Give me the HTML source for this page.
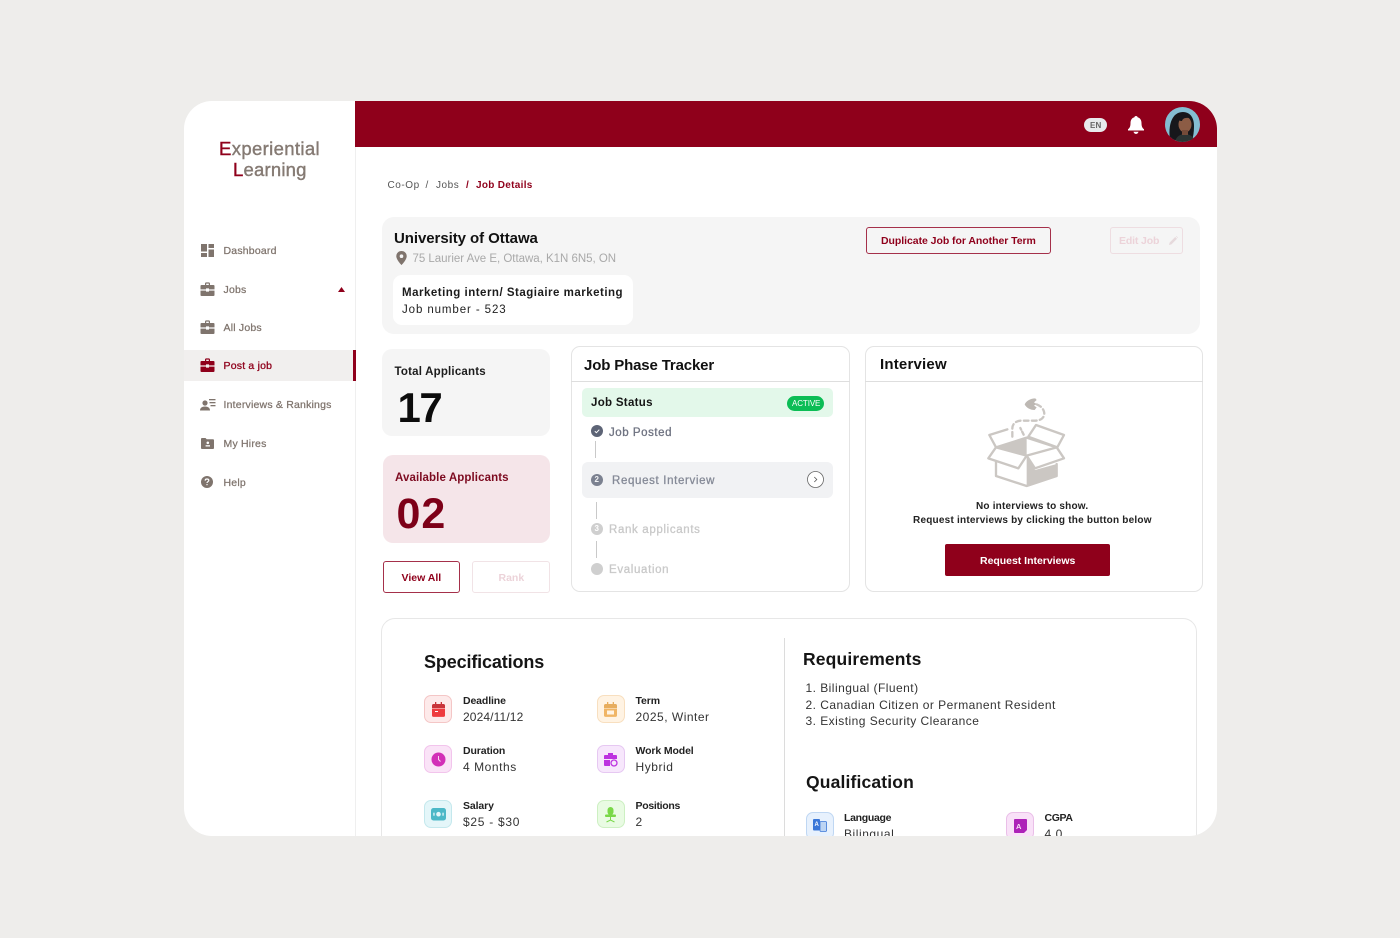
<!DOCTYPE html>
<html lang="en"><head><meta charset="utf-8"><title>Job Details</title>
<style>
html,body{margin:0;padding:0;width:1400px;height:938px;overflow:hidden;background:#eeedeb;font-family:"Liberation Sans",sans-serif;}
.a{position:absolute;}
.t{position:absolute;white-space:nowrap;line-height:1;}
#shell{position:absolute;left:184px;top:101px;width:1033px;height:735px;background:#fff;border-radius:28px;overflow:hidden;}
#stage{position:absolute;left:-184px;top:-101px;width:1400px;height:938px;}
.nav{font-size:10.5px;color:#7f746d;font-weight:400;letter-spacing:.2px;-webkit-text-stroke:.25px #7f746d;}
.k{font-size:10.5px;font-weight:700;color:#222;letter-spacing:-.12px;}
.v{font-size:12px;color:#333;letter-spacing:.55px;}
.ic{position:absolute;width:28px;height:28px;border-radius:7px;box-sizing:border-box;border:1px solid;}
.crumb{font-size:10px;color:#555;letter-spacing:.55px;}
svg{position:absolute;overflow:visible;}
</style></head><body>
<div id="shell"><div id="stage">

<div class="a" style="left:355px;top:101px;width:862px;height:46px;background:#8f001b;"></div>
<div class="a" style="left:355px;top:147px;width:1px;height:700px;background:#efefef;"></div>

<!-- logo -->
<div class="t" style="left:219px;top:139.5px;font-size:18.5px;color:#857a73;letter-spacing:.36px;-webkit-text-stroke:.4px #857a73;"><span style="color:#8f001b;-webkit-text-stroke:.4px #8f001b;">E</span>xperiential</div>
<div class="t" style="left:233px;top:160.5px;font-size:18.5px;color:#857a73;letter-spacing:.2px;-webkit-text-stroke:.4px #857a73;"><span style="color:#8f001b;-webkit-text-stroke:.4px #8f001b;">L</span>earning</div>

<!-- nav -->
<div class="a" style="left:184px;top:350px;width:171px;height:31px;background:#f1efee;"></div>
<div class="a" style="left:352.5px;top:350px;width:3px;height:31px;background:#8f001b;"></div>

<svg style="left:201px;top:244px" width="14" height="13" viewBox="0 0 14 13" fill="#7f746d"><rect x="0" y="0" width="6" height="7.5"/><rect x="7.5" y="0" width="5.5" height="4"/><rect x="0" y="9" width="6" height="4"/><rect x="7.5" y="5.5" width="5.5" height="7.5"/></svg>
<div class="t nav" style="left:223.5px;top:245.5px;">Dashboard</div>

<svg style="left:200px;top:282px" width="15" height="14" viewBox="0 0 15 14" fill="#7f746d"><path d="M5 3V1.6C5 .9 5.5.4 6.2.4h2.6c.7 0 1.2.5 1.2 1.2V3H13.5c.6 0 1 .4 1 1v3.4H9V6.4H6v1H.5V4c0-.6.4-1 1-1zM6.2 1.6V3h2.6V1.6z"/><path d="M.5 8.6H6v1h3v-1h5.5V13c0 .6-.4 1-1 1h-12c-.6 0-1-.4-1-1z"/></svg>
<div class="t nav" style="left:223.5px;top:284.5px;">Jobs</div>
<svg style="left:338px;top:287px" width="7" height="5" viewBox="0 0 7 5"><path d="M3.5 0L7 5H0z" fill="#8f001b"/></svg>

<svg style="left:200px;top:320px" width="15" height="14" viewBox="0 0 15 14" fill="#7f746d"><path d="M5 3V1.6C5 .9 5.5.4 6.2.4h2.6c.7 0 1.2.5 1.2 1.2V3H13.5c.6 0 1 .4 1 1v3.4H9V6.4H6v1H.5V4c0-.6.4-1 1-1zM6.2 1.6V3h2.6V1.6z"/><path d="M.5 8.6H6v1h3v-1h5.5V13c0 .6-.4 1-1 1h-12c-.6 0-1-.4-1-1z"/></svg>
<div class="t nav" style="left:223.5px;top:322.5px;">All Jobs</div>

<svg style="left:200px;top:358px" width="15" height="14" viewBox="0 0 15 14" fill="#8f001b"><path d="M5 3V1.6C5 .9 5.5.4 6.2.4h2.6c.7 0 1.2.5 1.2 1.2V3H13.5c.6 0 1 .4 1 1v3.4H9V6.4H6v1H.5V4c0-.6.4-1 1-1zM6.2 1.6V3h2.6V1.6z"/><path d="M.5 8.6H6v1h3v-1h5.5V13c0 .6-.4 1-1 1h-12c-.6 0-1-.4-1-1z"/></svg>
<div class="t nav" style="left:223.5px;top:360.5px;color:#8f001b;-webkit-text-stroke:.3px #8f001b;">Post a job</div>

<svg style="left:200px;top:399px" width="16" height="12" viewBox="0 0 16 12" fill="#7f746d"><circle cx="5" cy="4" r="2.6"/><path d="M0 11.5c0-2.6 2-4 5-4s5 1.4 5 4z"/><rect x="9" y="0" width="6.5" height="1.3"/><rect x="9.5" y="3" width="6" height="1.3"/><rect x="10.5" y="6" width="5" height="1.3"/></svg>
<div class="t nav" style="left:223.5px;top:399.5px;">Interviews &amp; Rankings</div>

<svg style="left:201px;top:438px" width="13" height="11" viewBox="0 0 13 11" fill="#7f746d"><path d="M0 1c0-.6.4-1 1-1h3.5l1.2 1.3H12c.6 0 1 .4 1 1V10c0 .6-.4 1-1 1H1c-.6 0-1-.4-1-1z"/><circle cx="6.8" cy="4.8" r="1.3" fill="#fff"/><rect x="4.6" y="7.2" width="4.4" height="1.3" fill="#fff"/></svg>
<div class="t nav" style="left:223.5px;top:438.5px;">My Hires</div>

<svg style="left:201px;top:476px" width="12" height="12" viewBox="0 0 12 12"><circle cx="6" cy="6" r="6" fill="#7f746d"/><path d="M4.2 4.6C4.2 3.6 5 3 6 3s1.8.6 1.8 1.5S6 5.8 6 7" fill="none" stroke="#fff" stroke-width="1.2"/><rect x="5.4" y="8" width="1.2" height="1.2" fill="#fff"/></svg>
<div class="t nav" style="left:223.5px;top:477.5px;">Help</div>

<!-- header right -->
<div class="a" style="left:1084px;top:118px;width:23px;height:14px;border-radius:7px;background:#e8eaec;"></div>
<div class="t" style="left:1090px;top:121.5px;font-size:8px;color:#666;letter-spacing:.2px;font-weight:700;">EN</div>
<svg style="left:1128px;top:116px" width="16" height="18" viewBox="0 0 16 18" fill="#fff"><path d="M8 0c.9 0 1.500.6 1.600 1.300C12.200 2 13.500 4.300 13.500 7c0 3 .5 4.700 2.500 6.300V14.500H0v-1.200C2 11.700 2.500 10 2.500 7c0-2.700 1.300-5 3.900-5.700C6.500.6 7.100 0 8 0z"/><path d="M5.500 15.800h5c-.3 1.300-1.300 2.200-2.500 2.200s-2.200-.9-2.500-2.200z"/></svg>
<svg style="left:1165px;top:107px" width="35" height="35" viewBox="0 0 35 35"><defs><clipPath id="av"><circle cx="17.500" cy="17.500" r="17.500"/></clipPath></defs><g clip-path="url(#av)"><rect width="35" height="35" fill="#84bdd2"/><path d="M5 33C3 20 6 5 18 5c8 0 11 7 11 14 0 5-.5 10-2 14z" fill="#17171b"/><ellipse cx="20" cy="17.500" rx="6.500" ry="8" fill="#8c5c45"/><path d="M12 11c3-4 10-4 14 0-3 0-8-1-9 3-2 0-4-1-5-3z" fill="#17171b"/><path d="M10 35c1-6 6-8 10-8s9 2 10 8z" fill="#2b3433"/><path d="M17 23h6v5h-6z" fill="#744b39"/></g></svg>

<!-- breadcrumb -->
<div class="t crumb" style="left:387.5px;top:180.6px;">Co-Op</div>
<div class="t crumb" style="left:425.5px;top:180.6px;">/</div>
<div class="t crumb" style="left:436px;top:180.6px;">Jobs</div>
<div class="t crumb" style="left:466px;top:180.6px;color:#8f001b;font-weight:700;">/</div>
<div class="t crumb" style="left:476px;top:180.6px;color:#8f001b;font-weight:700;letter-spacing:.3px;">Job Details</div>

<!-- university card -->
<div class="a" style="left:382px;top:217px;width:818px;height:117px;background:#f5f5f5;border-radius:12px;"></div>
<div class="t" style="left:394px;top:231px;font-size:15px;font-weight:700;color:#111;letter-spacing:-.06px;">University of Ottawa</div>
<svg style="left:396px;top:251px" width="11" height="14" viewBox="0 0 11 14"><path d="M5.500 0C2.500 0 .3 2.200.3 5.200.3 8.800 5.500 14 5.500 14s5.200-5.200 5.200-8.800C10.700 2.200 8.500 0 5.500 0z" fill="#7f746d"/><circle cx="5.500" cy="5.200" r="1.800" fill="#f5f5f5"/></svg>
<div class="t" style="left:412.5px;top:253.5px;font-size:11.5px;color:#a9a9a9;letter-spacing:-.02px;">75 Laurier Ave E, Ottawa, K1N 6N5, ON</div>
<div class="a" style="left:393px;top:275px;width:240px;height:50px;background:#fff;border-radius:9px;"></div>
<div class="t" style="left:402px;top:287.5px;font-size:11.5px;font-weight:700;color:#1c1c1c;letter-spacing:.5px;">Marketing intern/ Stagiaire marketing</div>
<div class="t" style="left:402px;top:304.5px;font-size:11.5px;color:#222;letter-spacing:.9px;">Job number - 523</div>

<div class="a" style="left:866px;top:227px;width:185px;height:27px;box-sizing:border-box;border:1px solid #a5304a;border-radius:3px;"></div>
<div class="t" style="left:881px;top:235.5px;font-size:10.5px;font-weight:700;color:#8f001b;letter-spacing:-.05px;">Duplicate Job for Another Term</div>
<div class="a" style="left:1110px;top:227px;width:73px;height:27px;box-sizing:border-box;border:1px solid #eedde1;border-radius:3px;"></div>
<div class="t" style="left:1119px;top:235.5px;font-size:10.5px;font-weight:700;color:#ecd3d9;letter-spacing:-.15px;">Edit Job</div>
<svg style="left:1169px;top:236px" width="9" height="9" viewBox="0 0 9 9"><path d="M0 9l.6-2.400L6.200 1l1.800 1.800L2.400 8.400zM6.900.3L7.400 0 9 1.600l-.4.500z" fill="#e6d9dc"/></svg>

<!-- left stats -->
<div class="a" style="left:382px;top:349px;width:168px;height:87px;background:#f5f5f5;border-radius:10px;"></div>
<div class="t" style="left:394.5px;top:366.5px;font-size:11.5px;font-weight:700;color:#1c1c1c;letter-spacing:.2px;">Total Applicants</div>
<div class="t" style="left:397.5px;top:387px;font-size:42px;font-weight:700;color:#0c0c0c;letter-spacing:-1.5px;">17</div>
<div class="a" style="left:383px;top:455px;width:167px;height:88px;background:#f5e5e9;border-radius:10px;"></div>
<div class="t" style="left:395px;top:472.5px;font-size:11.5px;font-weight:700;color:#7d0a20;letter-spacing:.1px;">Available Applicants</div>
<div class="t" style="left:396.5px;top:493px;font-size:43px;font-weight:700;color:#7d0018;letter-spacing:1px;">02</div>
<div class="a" style="left:383px;top:561px;width:77px;height:32px;box-sizing:border-box;border:1px solid #a5304a;border-radius:3px;"></div>
<div class="t" style="left:401.5px;top:572.5px;font-size:10.5px;font-weight:700;color:#8f001b;letter-spacing:0;">View All</div>
<div class="a" style="left:472px;top:561px;width:78px;height:32px;box-sizing:border-box;border:1px solid #f1e3e6;border-radius:3px;"></div>
<div class="t" style="left:498.5px;top:572.5px;font-size:10.5px;font-weight:700;color:#ecd3d9;letter-spacing:0;">Rank</div>

<!-- tracker -->
<div class="a" style="left:571px;top:346px;width:279px;height:246px;box-sizing:border-box;border:1px solid #e4e4e4;border-radius:9px;"></div>
<div class="a" style="left:571px;top:381px;width:279px;height:1px;background:#dedede;"></div>
<div class="t" style="left:584px;top:358px;font-size:15px;font-weight:700;color:#111;letter-spacing:-.15px;">Job Phase Tracker</div>
<div class="a" style="left:582px;top:388px;width:251px;height:29px;background:#e3f8ea;border-radius:5px;"></div>
<div class="t" style="left:591px;top:398px;font-size:11.5px;font-weight:700;color:#151515;letter-spacing:.3px;">Job Status</div>
<div class="a" style="left:787px;top:396px;width:37px;height:15px;background:#0bbd55;border-radius:8px;"></div>
<div class="t" style="left:792px;top:400px;font-size:8px;color:#fff;letter-spacing:-.1px;">ACTIVE</div>

<svg style="left:591px;top:425px" width="12" height="12" viewBox="0 0 12 12"><circle cx="6" cy="6" r="6" fill="#5d6476"/><path d="M3.800 6.200l1.600 1.500 2.900-3" fill="none" stroke="#fff" stroke-width="1"/></svg>
<div class="t" style="left:609px;top:427.5px;font-size:11.5px;font-weight:400;color:#6e7280;letter-spacing:.55px;-webkit-text-stroke:.3px #6e7280;">Job Posted</div>
<div class="a" style="left:595px;top:441px;width:1px;height:17px;background:#c9c9c9;"></div>

<div class="a" style="left:582px;top:462px;width:251px;height:36px;background:#f1f2f4;border-radius:6px;"></div>
<svg style="left:591px;top:474px" width="12" height="12" viewBox="0 0 12 12"><circle cx="6" cy="6" r="6" fill="#7b8190"/></svg>
<div class="t" style="left:594.5px;top:476px;font-size:8px;font-weight:700;color:#f1f2f4;">2</div>
<div class="t" style="left:612px;top:475.5px;font-size:11.5px;color:#858a97;letter-spacing:.65px;-webkit-text-stroke:.3px #858a97;">Request Interview</div>
<svg style="left:807px;top:471px" width="17" height="17" viewBox="0 0 17 17"><circle cx="8.500" cy="8.500" r="8" fill="#fff" stroke="#666" stroke-width=".8"/><path d="M7.300 6l2.500 2.500-2.500 2.500" fill="none" stroke="#555" stroke-width=".8"/></svg>
<div class="a" style="left:595.5px;top:502px;width:1px;height:17px;background:#c9c9c9;"></div>
<svg style="left:591px;top:523px" width="12" height="12" viewBox="0 0 12 12"><circle cx="6" cy="6" r="6" fill="#cfcfcf"/></svg>
<div class="t" style="left:594.5px;top:525px;font-size:8px;font-weight:700;color:#fff;">3</div>
<div class="t" style="left:609px;top:524.5px;font-size:11.5px;color:#c9c9c9;letter-spacing:.65px;-webkit-text-stroke:.3px #c9c9c9;">Rank applicants</div>
<div class="a" style="left:595.5px;top:541px;width:1px;height:17px;background:#c9c9c9;"></div>
<svg style="left:591px;top:563px" width="12" height="12" viewBox="0 0 12 12"><circle cx="6" cy="6" r="6" fill="#cfcfcf"/></svg>
<div class="t" style="left:609px;top:564.5px;font-size:11.5px;color:#c9c9c9;letter-spacing:.65px;-webkit-text-stroke:.3px #c9c9c9;">Evaluation</div>

<!-- interview -->
<div class="a" style="left:865px;top:346px;width:338px;height:246px;box-sizing:border-box;border:1px solid #e4e4e4;border-radius:9px;"></div>
<div class="a" style="left:865px;top:381px;width:338px;height:1px;background:#dedede;"></div>
<div class="t" style="left:880px;top:357px;font-size:15px;font-weight:700;color:#111;letter-spacing:.2px;">Interview</div>
<svg style="left:960px;top:390px" width="130" height="105" viewBox="0 0 390 315">
<path d="M108 172L200 143V197z" fill="#cbc7c3"/>
<path d="M200 200L225 240 290 222V258L200 288z" fill="#cbc7c3"/>
<g fill="none" stroke="#cbc7c3" stroke-width="7" stroke-linejoin="round" stroke-linecap="round">
<path d="M142 118L88 135 108 172 200 143"/>
<path d="M205 140L228 105 312 135 292 172z"/>
<path d="M108 172L85 205 175 235 200 197z"/>
<path d="M200 197L225 235 312 205 290 172z"/>
<path d="M108 215V258L200 288 290 258V222"/>
<path d="M200 143L290 172"/>
<path d="M157 140V115C157 100 170 92 185 92H225C245 92 256 80 252 65 249 54 240 47 230 43" stroke-dasharray="14 10"/>
<path d="M191 134L181 114" stroke-dasharray="10 7"/>
</g>
<path d="M226 25C210 25 198 34 194 43 198 52 210 60 224 60L230 52 222 47 230 42 222 37 230 30z" fill="#bdb8b3"/>
</svg>
<div class="t" style="left:976px;top:501.5px;font-size:10px;font-weight:700;color:#222;letter-spacing:.2px;">No interviews to show.</div>
<div class="t" style="left:913px;top:515.5px;font-size:10px;font-weight:700;color:#222;letter-spacing:.22px;">Request interviews by clicking the button below</div>
<div class="a" style="left:945px;top:544px;width:165px;height:32px;background:#8f001b;border-radius:2px;"></div>
<div class="t" style="left:980px;top:555.5px;font-size:10.5px;font-weight:700;color:#fff;letter-spacing:-.02px;">Request Interviews</div>

<!-- bottom card -->
<div class="a" style="left:381px;top:618px;width:816px;height:300px;box-sizing:border-box;border:1px solid #e7e7e7;border-radius:14px;"></div>
<div class="a" style="left:784px;top:638px;width:1px;height:220px;background:#dcdcdc;"></div>
<div class="t" style="left:424px;top:653px;font-size:18px;font-weight:700;color:#151515;letter-spacing:-.14px;">Specifications</div>
<div class="t" style="left:803px;top:651px;font-size:17.5px;font-weight:700;color:#151515;letter-spacing:.15px;">Requirements</div>
<div class="t" style="left:805.5px;top:682px;font-size:12px;color:#333;letter-spacing:.46px;">1. Bilingual (Fluent)</div>
<div class="t" style="left:805.5px;top:699px;font-size:12px;color:#333;letter-spacing:.46px;">2. Canadian Citizen or Permanent Resident</div>
<div class="t" style="left:805.5px;top:715px;font-size:12px;color:#333;letter-spacing:.46px;">3. Existing Security Clearance</div>
<div class="t" style="left:806px;top:774px;font-size:17.5px;font-weight:700;color:#151515;letter-spacing:.15px;">Qualification</div>

<!-- spec icons -->
<div class="ic" style="left:424px;top:695px;background:#fdeaea;border-color:#f4c6c6;"></div>
<svg style="left:432px;top:702px" width="13" height="15" viewBox="0 0 13 15"><path d="M0 3.500C0 2.700.6 2 1.400 2h10.200c.8 0 1.400.7 1.400 1.500V6H0z" fill="#c8343a"/><path d="M0 6.500h13v7c0 .8-.6 1.400-1.400 1.400H1.400C.6 14.900 0 14.300 0 13.500z" fill="#ee3b3f"/><rect x="3" y="0" width="1.300" height="3" fill="#c8343a"/><rect x="8.700" y="0" width="1.300" height="3" fill="#c8343a"/><rect x="3" y="9" width="3" height="1" fill="#fff"/></svg>
<div class="t k" style="left:463px;top:696px;">Deadline</div>
<div class="t v" style="left:463px;top:711px;letter-spacing:.12px;">2024/11/12</div>

<div class="ic" style="left:597px;top:695px;background:#fff3e3;border-color:#f8dfbf;"></div>
<svg style="left:604px;top:702px" width="13" height="15" viewBox="0 0 13 15"><path d="M0 3.500C0 2.700.6 2 1.400 2h10.200c.8 0 1.400.7 1.400 1.500V6H0z" fill="#e7ad5e"/><path d="M0 6.500h13v7c0 .8-.6 1.400-1.400 1.400H1.400C.6 14.900 0 14.300 0 13.500z" fill="#f0b565"/><rect x="3" y="0" width="1.300" height="3" fill="#e7ad5e"/><rect x="8.700" y="0" width="1.300" height="3" fill="#e7ad5e"/><rect x="3" y="8.500" width="7" height="4" fill="#fff3e3"/></svg>
<div class="t k" style="left:635.5px;top:696px;">Term</div>
<div class="t v" style="left:635.5px;top:711px;letter-spacing:.5px;">2025, Winter</div>

<div class="ic" style="left:424px;top:745px;background:#fae3f7;border-color:#f2c4ec;"></div>
<svg style="left:431px;top:752px" width="15" height="15" viewBox="0 0 15 15"><circle cx="7.500" cy="7.500" r="7" fill="#d22fb7"/><path d="M7.500 4v3.500l2 2" fill="none" stroke="#f8d5f2" stroke-width="1"/></svg>
<div class="t k" style="left:463px;top:746px;">Duration</div>
<div class="t v" style="left:463px;top:761px;">4 Months</div>

<div class="ic" style="left:597px;top:745px;background:#f7e7fc;border-color:#e6c8f2;"></div>
<svg style="left:604px;top:752px" width="14" height="15" viewBox="0 0 14 15"><path d="M4 3V1h5v2h3c.6 0 1 .4 1 1v3H0V4c0-.6.4-1 1-1z" fill="#bd32e0"/><path d="M0 8h6v6H1c-.6 0-1-.4-1-1z" fill="#bd32e0"/><circle cx="10" cy="11" r="3" fill="none" stroke="#bd32e0" stroke-width="1.300"/></svg>
<div class="t k" style="left:635.5px;top:746px;">Work Model</div>
<div class="t v" style="left:635.5px;top:761px;">Hybrid</div>

<div class="ic" style="left:424px;top:800px;background:#e4f6f9;border-color:#c4e8ed;"></div>
<svg style="left:431px;top:808px" width="15" height="13" viewBox="0 0 15 13"><rect x="0" y="0" width="15" height="12.500" rx="2.500" fill="#4cb8c7"/><circle cx="7.500" cy="6.200" r="2.300" fill="#e4f6f9"/><rect x="2.300" y="4.700" width="1.300" height="3" fill="#e4f6f9"/><rect x="11.400" y="4.700" width="1.300" height="3" fill="#e4f6f9"/></svg>
<div class="t k" style="left:463px;top:800.5px;">Salary</div>
<div class="t v" style="left:463px;top:816px;letter-spacing:.72px;">$25 - $30</div>

<div class="ic" style="left:597px;top:800px;background:#e9fbe3;border-color:#cdf0c2;"></div>
<svg style="left:604px;top:807px" width="13" height="16" viewBox="0 0 13 16"><rect x="3.500" y="0" width="6" height="8" rx="3" fill="#79d848"/><rect x="1" y="7.500" width="11" height="2.500" rx="1" fill="#79d848"/><rect x="6" y="10" width="1" height="3" fill="#79d848"/><path d="M2.500 15l4-2 4 2" fill="none" stroke="#79d848"/></svg>
<div class="t k" style="left:635.5px;top:800.5px;letter-spacing:-.3px;">Positions</div>
<div class="t v" style="left:635.5px;top:816px;">2</div>

<div class="ic" style="left:806px;top:812px;background:#e7f1fd;border-color:#bfd7f3;"></div>
<svg style="left:813px;top:819px" width="14" height="14" viewBox="0 0 14 14"><rect x="0" y="0" width="7" height="11.500" rx="1" fill="#3b77d8"/><rect x="7" y="2.500" width="6.500" height="10" rx="1" fill="#bcd4f3" stroke="#3b77d8" stroke-width=".8"/></svg>
<div class="t" style="left:814.5px;top:822px;font-size:6px;font-weight:700;color:#fff;">A</div>
<div class="t k" style="left:844px;top:813px;letter-spacing:-.3px;">Language</div>
<div class="t v" style="left:844px;top:828px;letter-spacing:.55px;">Bilingual</div>

<div class="ic" style="left:1006px;top:812px;background:#f9e1f8;border-color:#eabfe8;"></div>
<svg style="left:1014px;top:819px" width="13" height="15" viewBox="0 0 13 15"><path d="M0 1C0 .4.400 0 1 0h11c.6 0 1 .4 1 1v10l-3 3H1c-.6 0-1-.4-1-1z" fill="#ad22b8"/></svg>
<div class="t" style="left:1016px;top:823px;font-size:7.5px;font-weight:700;color:#f9e1f8;">A</div>
<div class="t k" style="left:1044.5px;top:813px;letter-spacing:-.35px;">CGPA</div>
<div class="t v" style="left:1044.5px;top:828px;">4.0</div>

</div></div>
</body></html>
